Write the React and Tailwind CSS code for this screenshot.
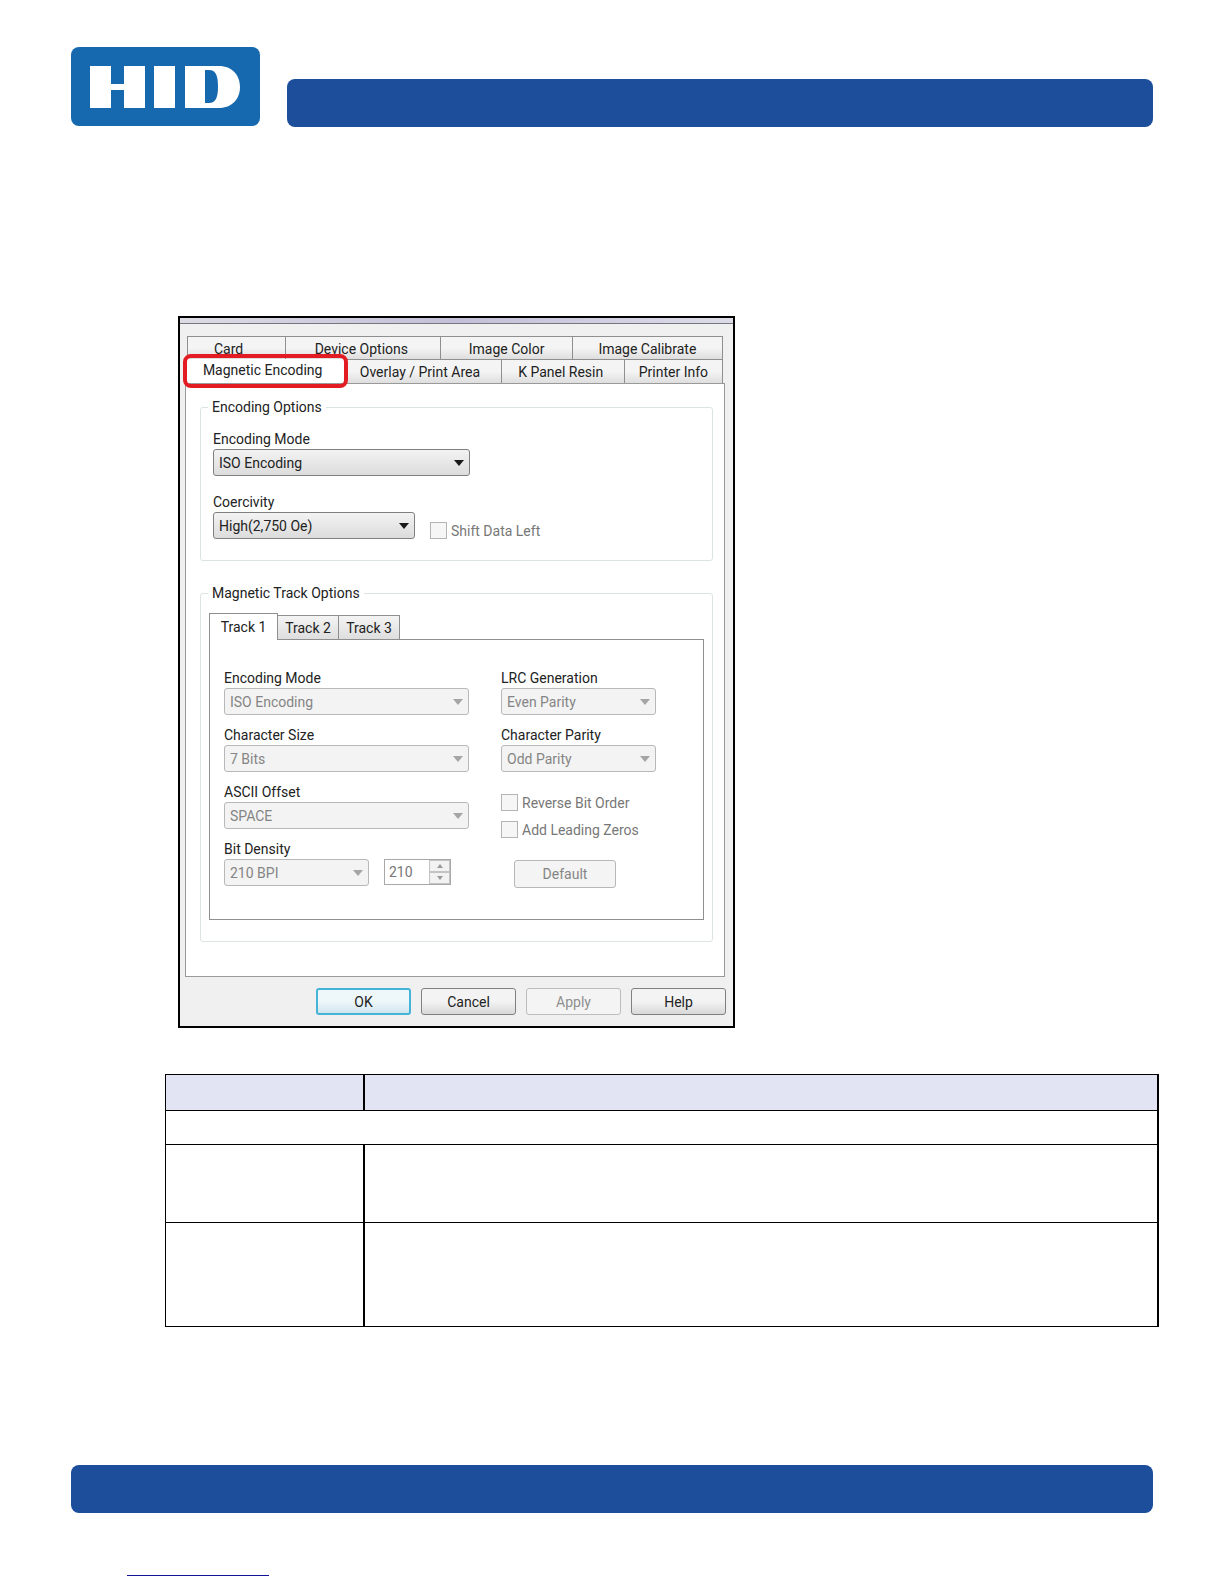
import React, { useId, useState } from 'react';
import clsx from 'clsx';

const TOP_TABS = ['Card', 'Device Options', 'Image Color', 'Image Calibrate'];
const BOTTOM_TABS = ['Magnetic Encoding', 'Overlay / Print Area', 'K Panel Resin', 'Printer Info'];
const TRACKS = ['Track 1', 'Track 2', 'Track 3'];

function Logo() {
  return (
    <svg viewBox="0 0 189 79" className="mb-px w-[189px] shrink-0" role="img" aria-label="HID">
      <rect width="189" height="79" rx="8" fill="#1769af" />
      <g fill="#fff">
        <path d="M19 19h21v18h13V19h21v42H53V43H40v18H19z" />
        <path d="M83 19h21v42H83z" />
        <path
          fillRule="evenodd"
          d="M114 19h34c13 0 21 9 21 21s-8 21-21 21h-34zM134 23v33h4c7 0 9-6 9-16.500s-2-16.500-9-16.500z"
        />
      </g>
    </svg>
  );
}

function SelectField({ label, value, disabled, width }) {
  const id = useId();
  return (
    <div className={clsx('flex flex-col', width)}>
      <label htmlFor={id} className="h-5 leading-5 text-[#222]">{label}</label>
      <div className="relative">
        <select
          id={id}
          disabled={disabled}
          className={clsx(
            'block h-[27px] w-full appearance-none rounded-[3px] border pl-[5px] pr-6 opacity-100',
            disabled
              ? 'border-[#b8b8b8] bg-[#f3f3f3] text-[#858585]'
              : 'border-[#808080] bg-linear-to-b from-[#f3f3f3] to-[#dcdcdc] text-[#222]'
          )}
        >
          <option>{value}</option>
        </select>
        <svg viewBox="0 0 10 6" className="pointer-events-none absolute right-[6px] top-[11px] w-[10px]">
          <path d="M0 0h10L5 6z" fill={disabled ? '#a5a5a5' : '#1a1a1a'} />
        </svg>
      </div>
    </div>
  );
}

function Check({ label }) {
  return (
    <label className="flex h-[17px] items-center gap-1 whitespace-nowrap text-[#777]">
      <input
        type="checkbox"
        disabled
        className="size-[17px] shrink-0 appearance-none border border-[#b4b4b4] bg-[#f6f6f6]"
      />
      {label}
    </label>
  );
}

function Tab({ label, last, className }) {
  return (
    <button
      type="button"
      role="tab"
      aria-selected="false"
      className={clsx(
        'whitespace-nowrap border-l border-t border-[#8f8f8f] bg-linear-to-b from-[#f4f4f4] from-50% to-[#dedede] text-center text-[#222]',
        last && 'border-r',
        className
      )}
    >
      {label}
    </button>
  );
}

function Spinner() {
  return (
    <div className="mb-px flex h-[26px] w-[67px] border border-[#a8a8a8] bg-white">
      <input
        type="text"
        aria-label="Bit density value"
        disabled
        defaultValue="210"
        className="w-11 min-w-0 pl-1 text-[#777]"
      />
      <div className="flex flex-1 flex-col">
        {['M0 4h6L3 0z', 'M0 0h6L3 4z'].map((d, i) => (
          <button
            key={d}
            type="button"
            disabled
            aria-label={i ? 'Decrease' : 'Increase'}
            className="flex flex-1 items-center justify-center border border-[#c4c4c4] bg-[#f2f2f2]"
          >
            <svg viewBox="0 0 6 4" className="w-[6px]">
              <path d={d} fill="#999" />
            </svg>
          </button>
        ))}
      </div>
    </div>
  );
}

function DialogButton({ children, primary, disabled }) {
  return (
    <button
      type="button"
      disabled={disabled}
      className={clsx(
        'h-[27px] w-[95px] rounded-[3px]',
        primary && 'border-2 border-[#45b4d6] bg-linear-to-b from-[#eef7fa] from-50% to-[#cfe6ee] text-[#222]',
        disabled && 'border border-[#bdbdbd] bg-[#f4f4f4] text-[#8f8f8f]',
        !primary && !disabled && 'border border-[#808080] bg-linear-to-b from-[#f3f3f3] from-50% to-[#d8d8d8] text-[#222]'
      )}
    >
      {children}
    </button>
  );
}

function TrackPanel() {
  const [track, setTrack] = useState('Track 1');

  return (
    <div className="pt-[10px]">
      <div role="tablist" className="flex h-[26px] items-end">
        {TRACKS.map((t, i) => (
          <button
            key={t}
            type="button"
            role="tab"
            aria-selected={t === track}
            onClick={() => setTrack(t)}
            className={clsx(
              'border-t border-[#8f8f8f] whitespace-nowrap',
              t === track
                ? 'z-10 -mb-px h-[27px] w-[69px] border-x bg-white'
                : 'h-6 w-[61px] border-r bg-linear-to-b from-[#f4f4f4] to-[#dedede]',
              i === 0 && t !== track && 'border-l'
            )}
          >
            {t}
          </button>
        ))}
      </div>
      <div className="flex gap-8 border border-[#8f8f8f] bg-white pb-[31px] pl-[14px] pt-7">
        <div className="flex w-[245px] flex-col gap-[10px]">
          <SelectField label="Encoding Mode" value="ISO Encoding" disabled />
          <SelectField label="Character Size" value="7 Bits" disabled />
          <SelectField label="ASCII Offset" value="SPACE" disabled />
          <div className="flex items-end gap-[15px]">
            <SelectField label="Bit Density" value="210 BPI" disabled width="w-[145px]" />
            <Spinner />
          </div>
        </div>
        <div className="flex w-[155px] flex-col gap-[10px]">
          <SelectField label="LRC Generation" value="Even Parity" disabled />
          <SelectField label="Character Parity" value="Odd Parity" disabled />
          <div className="mt-3 flex flex-col gap-[10px]">
            <Check label="Reverse Bit Order" />
            <Check label="Add Leading Zeros" />
          </div>
          <button
            type="button"
            disabled
            className="ml-[13px] mt-3 h-7 w-[102px] rounded-[3px] border border-[#b8b8b8] bg-[#f4f4f4] text-[#858585]"
          >
            Default
          </button>
        </div>
      </div>
    </div>
  );
}

function PrinterDialog() {
  return (
    <section className="w-full max-w-[557px] border-2 border-black bg-[#f0f0f0] font-[Roboto,'Liberation_Sans',sans-serif] text-sm text-[#222]">
      <div className="h-1.5 border-b border-[#77757f] bg-linear-to-r from-[#dcdce4] via-[#c3bfd8] to-[#dcdce8]" />

      <div className="pl-[5px] pr-2 pt-3">
        {/* Tabs */}
        <div role="tablist" className="mx-[2px]">
          <div className="grid h-[23px] grid-cols-[98fr_155fr_131fr_151fr]">
            {TOP_TABS.map((t, i) => (
              <Tab
                key={t}
                label={t}
                last={i === 3}
                className={clsx('pt-px', i === 0 && 'pr-4', i === 1 && 'pr-1')}
              />
            ))}
          </div>
          <div className="grid h-6 grid-cols-[159fr_154fr_123fr_99fr]">
            {BOTTOM_TABS.map((t, i) =>
              i === 0 ? (
                <button
                  key={t}
                  type="button"
                  role="tab"
                  aria-selected="true"
                  className="relative bg-white pb-[2px] pr-2"
                >
                  {t}
                  <span className="absolute -bottom-[5px] -left-1 -right-[2px] -top-[5px] rounded-lg border-4 border-[#e31b23]" />
                </button>
              ) : (
                <Tab key={t} label={t} last={i === 3} className={clsx(i === 1 && 'pr-2', i === 2 && 'pr-1')} />
              )
            )}
          </div>
        </div>

        {/* Magnetic Encoding page */}
        <div className="border border-[#9a9a9a] bg-white pb-[34px] pl-[14px] pr-[11px] pt-[13px]">
          <fieldset className="rounded-[3px] border border-[#dce3e3] pb-[21px] pl-3 pr-2">
            <legend className="-ml-[5px] h-5 px-1 leading-5">Encoding Options</legend>
            <div className="flex flex-col gap-4 pt-3">
              <SelectField label="Encoding Mode" value="ISO Encoding" width="w-[257px]" />
              <div className="flex items-end gap-[15px]">
                <SelectField label="Coercivity" value="High(2,750 Oe)" width="w-[202px]" />
                <Check label="Shift Data Left" />
              </div>
            </div>
          </fieldset>

          <fieldset className="mt-[22px] rounded-[3px] border border-[#dce3e3] px-2 pb-[21px]">
            <legend className="-ml-px h-5 px-1 leading-5">Magnetic Track Options</legend>
            <TrackPanel />
          </fieldset>
        </div>
      </div>

      <div className="flex justify-end gap-[10px] pb-[11px] pr-[7px] pt-[11px]">
        <DialogButton primary>OK</DialogButton>
        <DialogButton>Cancel</DialogButton>
        <DialogButton disabled>Apply</DialogButton>
        <DialogButton>Help</DialogButton>
      </div>
    </section>
  );
}

export default function App() {
  return (
    <div className="bg-white pb-2">
      <header className="flex items-end gap-[27px] px-[71px] pt-[47px]">
        <Logo />
        <div className="h-12 flex-1 rounded-lg bg-[#1c4e9c]" />
      </header>

      <main>
        <div className="pl-[178px] pr-16 pt-[189px]">
          <PrinterDialog />
        </div>

        {/* Option descriptions */}
        <div className="pl-[165px] pr-[65px] pt-[46px]">
          <table className="w-full table-fixed border-collapse border border-r-2 border-black">
            <thead>
              <tr className="h-9 bg-[#e2e3f3]">
                <th className="w-1/5 border-r-2 border-black" />
                <th />
              </tr>
            </thead>
            <tbody>
              <tr className="h-[34px] border-t border-black">
                <td colSpan={2} />
              </tr>
              <tr className="h-[78px] border-t border-black">
                <td className="border-r-2 border-black" />
                <td />
              </tr>
              <tr className="h-[104px] border-t border-black">
                <td className="border-r-2 border-black" />
                <td />
              </tr>
            </tbody>
          </table>
        </div>
      </main>

      <footer className="px-[71px] pt-[138px]">
        <div className="h-12 rounded-lg bg-[#1c4e9c]" />
        <a href="#top" aria-label="Back to top" className="ml-14 mt-12 block h-[15px] w-[142px] border-b border-[#12129a]" />
      </footer>
    </div>
  );
}
